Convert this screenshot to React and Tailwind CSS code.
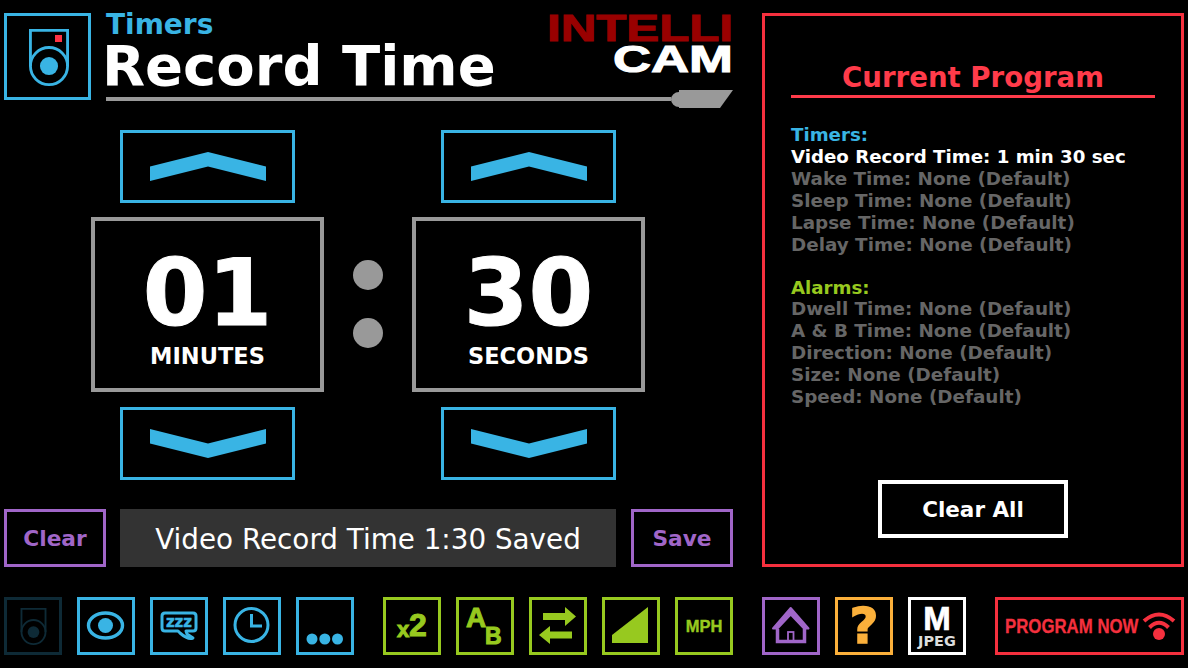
import React from 'react';

const BLUE = '#39b4e4';
const GREEN = '#97c91f';

const RecordGlyph = ({ color, className }) => (
  <svg viewBox="0 0 42 60" className={className} fill="none">
    <path d="M1.5 1.5H40.5V39A19.5 19.5 0 0 1 1.5 39Z" stroke={color} strokeWidth="3" />
    <path d="M1.5 39A19.5 19.5 0 0 1 40.5 39" stroke={color} strokeWidth="3" />
    <circle cx="21" cy="39" r="9.5" fill={color} />
  </svg>
);

const Chevron = ({ down }) => (
  <svg viewBox="0 0 116 29" className="w-[116px] h-[29px]">
    <polygon fill={BLUE} points={down ? '0,0 58,14.5 116,0 116,14.5 58,29 0,14.5' : '0,14.5 58,0 116,14.5 116,29 58,14.5 0,29'} />
  </svg>
);

const ArrowBtn = ({ down }) => (
  <button className="w-[175px] h-[73px] border-[3px] border-[#39b4e4] flex items-center justify-center">
    <Chevron down={down} />
  </button>
);

const TimeUnit = ({ value, label }) => (
  <div className="w-[233px] flex flex-col items-center">
    <ArrowBtn />
    <div className="w-[233px] h-[175px] mt-[14px] mb-[15px] border-4 border-[#999999] flex flex-col items-center">
      <div className="text-[93px] leading-[92px] font-bold text-white mt-[26px] [-webkit-text-stroke:1px_#ffffff]">{value}</div>
      <div className="text-[22.5px] leading-[26px] font-bold text-white mt-[4px]">{label}</div>
    </div>
    <ArrowBtn down />
  </div>
);

const IconBox = ({ border, children, className = '' }) => (
  <button className={`relative w-[58px] h-[58px] shrink-0 border-[3px] ${border} flex items-center justify-center ${className}`}>
    {children}
  </button>
);

// icons are drawn in the 58x58 box, border included
const BoxSvg = ({ children }) => (
  <svg viewBox="0 0 58 58" className="absolute -left-[3px] -top-[3px] w-[58px] h-[58px]">{children}</svg>
);

const ProgramLine = ({ children, className = 'text-[#666666] text-[18.35px]' }) => (
  <div className={`leading-[22px] font-bold whitespace-nowrap ${className}`}>{children}</div>
);

export default function App() {
  return (
    <div className="w-[1188px] h-[668px] bg-black overflow-hidden flex flex-col pt-[13px] pl-[4px] font-['DejaVu_Sans',sans-serif]">
      <div className="flex h-[554px]">
        {/* left side */}
        <div className="w-[729px] flex flex-col">
          <div className="flex h-[95px]">
            <div className="relative w-[87px] h-[87px] border-[3px] border-[#39b4e4] flex items-center justify-center">
              <RecordGlyph color={BLUE} className="w-[40px] h-[59px] mt-[2px] ml-[2px]" />
              <div className="absolute left-[48px] top-[19px] w-[7px] h-[7px] bg-[#ff3344]" />
            </div>
            <div className="flex-1 ml-[12px] flex flex-col">
              <div className="flex justify-between h-[77px]">
                <div className="-mt-[1px]">
                  <div className="text-[28px] leading-[26px] font-bold text-[#39b4e4] ml-[3px]">Timers</div>
                  <div className="text-[56px] leading-[56px] font-bold text-white -ml-[1px]">Record Time</div>
                </div>
                <svg viewBox="0 0 186 60" className="w-[186px] h-[60px] overflow-visible">
                  <text x="0" y="27.5" fontFamily="Liberation Sans" fontWeight="700" fontSize="37" fill="#990000" stroke="#990000" strokeWidth="1" strokeLinejoin="miter" textLength="186" lengthAdjust="spacingAndGlyphs">INTELLI</text>
                  <text x="66" y="58.5" fontFamily="Liberation Sans" fontWeight="700" fontSize="37" fill="#ffffff" stroke="#ffffff" strokeWidth="1" strokeLinejoin="miter" textLength="120" lengthAdjust="spacingAndGlyphs">CAM</text>
                </svg>
              </div>
              <div className="flex items-center h-[18px] ml-[3px]">
                <div className="flex-1 h-[4px] bg-[#999999]" />
                <svg viewBox="0 0 62 18" className="w-[62px] h-[18px]">
                  <path d="M8 2V17A8 7.5 0 0 1 0 9.5A8 7.5 0 0 1 8 2Z" fill="#999999" />
                  <polygon points="8,0 62,0 49,18 8,18" fill="#999999" />
                </svg>
              </div>
            </div>
          </div>

          <div className="flex ml-[87px] mt-[22px]">
            <TimeUnit value="01" label="MINUTES" />
            <div className="w-[88px] flex flex-col items-center pt-[130px] gap-[28px]">
              <div className="w-[30px] h-[30px] rounded-full bg-[#999999]" />
              <div className="w-[30px] h-[30px] rounded-full bg-[#999999]" />
            </div>
            <TimeUnit value="30" label="SECONDS" />
          </div>

          <div className="flex mt-[29px] h-[58px]">
            <button className="w-[102px] border-[3px] border-[#a066c8] text-[#a066c8] text-[21.7px] font-bold pt-[3px]">Clear</button>
            <div className="w-[496px] ml-[14px] bg-[#333333] flex items-center justify-center text-white text-[27.8px] pt-[3px]">Video Record Time 1:30 Saved</div>
            <button className="w-[102px] ml-[15px] border-[3px] border-[#a066c8] text-[#a066c8] text-[21.7px] font-bold pt-[3px]">Save</button>
          </div>
        </div>

        {/* current program panel */}
        <div className="w-[422px] ml-[29px] border-[3px] border-[#f5303e] flex flex-col px-[26px]">
          <div className="text-[27.6px] leading-[32px] font-bold text-[#ff3b4a] text-center mt-[46px]">Current Program</div>
          <div className="h-[3px] bg-[#ff3b4a] mt-[1px]" />
          <div className="mt-[26px]">
            <ProgramLine className="text-[#39b4e4] text-[18.2px]">Timers:</ProgramLine>
            <ProgramLine className="text-white text-[18.2px]">Video Record Time: 1 min 30 sec</ProgramLine>
            <ProgramLine>Wake Time: None (Default)</ProgramLine>
            <ProgramLine>Sleep Time: None (Default)</ProgramLine>
            <ProgramLine>Lapse Time: None (Default)</ProgramLine>
            <ProgramLine>Delay Time: None (Default)</ProgramLine>
          </div>
          <div className="mt-[21px]">
            <ProgramLine className="text-[#97c91f] text-[18.2px]">Alarms:</ProgramLine>
            <div className="-mt-[1px]">
              <ProgramLine>Dwell Time: None (Default)</ProgramLine>
              <ProgramLine>A &amp; B Time: None (Default)</ProgramLine>
              <ProgramLine>Direction: None (Default)</ProgramLine>
              <ProgramLine>Size: None (Default)</ProgramLine>
              <ProgramLine>Speed: None (Default)</ProgramLine>
            </div>
          </div>
          <button className="w-[190px] h-[58px] self-center mt-[72px] border-4 border-white text-white text-[21.5px] font-bold pt-[2px]">Clear All</button>
        </div>
      </div>

      {/* bottom toolbar */}
      <div className="flex mt-[30px] gap-[15px]">
        <IconBox border="border-[#0e2a36]">
          <RecordGlyph color="#0e2a36" className="w-[29px] h-[37px]" />
        </IconBox>
        <IconBox border="border-[#39b4e4]">
          <BoxSvg>
            <ellipse cx="28.5" cy="28.5" rx="17" ry="12.5" fill="none" stroke={BLUE} strokeWidth="3.4" />
            <circle cx="28.5" cy="28.5" r="7.5" fill={BLUE} />
          </BoxSvg>
        </IconBox>
        <IconBox border="border-[#39b4e4]">
          <BoxSvg>
            <path d="M15 16H43Q46 16 46 19V31Q46 34 43 34H36L37 37L43 41Q38 43 30 36L28 34H15Q12 34 12 31V19Q12 16 15 16Z" fill="none" stroke={BLUE} strokeWidth="3" strokeLinejoin="round" />
            <text x="29" y="30" textAnchor="middle" fontFamily="DejaVu Sans" fontWeight="700" fontSize="15" fill={BLUE} stroke={BLUE} strokeWidth="0.5">zzz</text>
          </BoxSvg>
        </IconBox>
        <IconBox border="border-[#39b4e4]">
          <BoxSvg>
            <circle cx="28.5" cy="28" r="16.5" fill="none" stroke={BLUE} strokeWidth="3" />
            <path d="M28.5 17V29H39" fill="none" stroke={BLUE} strokeWidth="3" />
          </BoxSvg>
        </IconBox>
        <IconBox border="border-[#39b4e4]">
          <BoxSvg>
            <circle cx="16" cy="42" r="5.5" fill={BLUE} />
            <circle cx="28.8" cy="42" r="5.5" fill={BLUE} />
            <circle cx="41.5" cy="42" r="5.5" fill={BLUE} />
          </BoxSvg>
        </IconBox>

        <IconBox border="border-[#97c91f]" className="ml-[14px]">
          <BoxSvg>
            <text x="14" y="40" fontFamily="Liberation Sans" fontWeight="700" fontSize="22" fill={GREEN} stroke={GREEN} strokeWidth="1">x</text>
            <text x="26" y="39" fontFamily="Liberation Sans" fontWeight="700" fontSize="32" fill={GREEN} stroke={GREEN} strokeWidth="1">2</text>
          </BoxSvg>
        </IconBox>
        <IconBox border="border-[#97c91f]">
          <BoxSvg>
            <text x="10" y="29.5" fontFamily="Liberation Sans" fontWeight="700" fontSize="28" fill={GREEN} stroke={GREEN} strokeWidth="1">A</text>
            <text x="29" y="46.5" fontFamily="Liberation Sans" fontWeight="700" fontSize="23" fill={GREEN} stroke={GREEN} strokeWidth="1">B</text>
          </BoxSvg>
        </IconBox>
        <IconBox border="border-[#97c91f]">
          <BoxSvg>
            <polygon fill={GREEN} points="14,16 36,16 36,10 47,19.5 36,29 36,23 14,23" />
            <polygon fill={GREEN} points="43,34.5 21,34.5 21,29 10,38 21,47 21,41.5 43,41.5" />
          </BoxSvg>
        </IconBox>
        <IconBox border="border-[#97c91f]">
          <BoxSvg>
            <polygon fill={GREEN} points="10,46 46,46 46,10 10,38" />
          </BoxSvg>
        </IconBox>
        <IconBox border="border-[#97c91f]">
          <span className="text-[#97c91f] text-[16.5px] font-bold font-['Liberation_Sans'] leading-none [-webkit-text-stroke:0.4px_#97c91f]">MPH</span>
        </IconBox>

        <IconBox border="border-[#a066c8]" className="ml-[14px]">
          <BoxSvg>
            <path d="M15.5 32V44.5H42.5V32" fill="none" stroke="#a066c8" strokeWidth="3.5" />
            <path d="M11 31.5L28.7 11L46.5 31.5H42L28.7 17.5L15.5 31.5Z" fill="#a066c8" stroke="#a066c8" strokeWidth="2" strokeLinejoin="round" />
            <rect x="26" y="35" width="5.5" height="9.5" fill="none" stroke="#a066c8" strokeWidth="1.8" />
          </BoxSvg>
        </IconBox>
        <IconBox border="border-[#fbb03b]">
          <span className="text-[#fbb03b] text-[50px] leading-none font-bold [-webkit-text-stroke:1.5px_#fbb03b]">?</span>
        </IconBox>
        <IconBox border="border-white" className="flex-col">
          <span className="text-white text-[33px] leading-[28px] font-bold font-['Liberation_Sans'] [-webkit-text-stroke:0.7px_#ffffff] mt-[1px]">M</span>
          <span className="text-[#dddddd] text-[14.5px] leading-[14px] font-bold mt-[1px]">JPEG</span>
        </IconBox>

        <button className="w-[189px] h-[58px] ml-[14px] border-[3px] border-[#f5303e] flex items-center pl-[7px]">
          <span className="w-[133px] shrink-0 origin-left scale-x-[0.84] text-left text-[#f5303e] text-[20px] font-bold font-['Liberation_Sans'] whitespace-nowrap [-webkit-text-stroke:0.3px_#f5303e]">PROGRAM NOW</span>
          <svg viewBox="0 0 34 30" className="w-[34px] h-[30px] ml-[4px] shrink-0">
            <path d="M2 10Q17 -3 32 10" fill="none" stroke="#f5303e" strokeWidth="4" />
            <path d="M7.5 16.5Q17 7 26.5 16.5" fill="none" stroke="#f5303e" strokeWidth="4" />
            <circle cx="17" cy="23" r="6" fill="#f5303e" />
          </svg>
        </button>
      </div>
    </div>
  );
}
